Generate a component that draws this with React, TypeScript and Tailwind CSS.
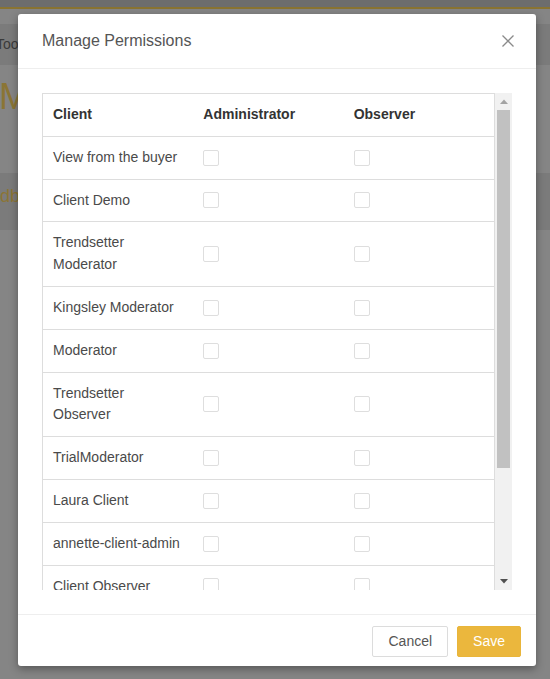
import React from "react";

const rows: string[] = [
  "View from the buyer",
  "Client Demo",
  "Trendsetter Moderator",
  "Kingsley Moderator",
  "Moderator",
  "Trendsetter Observer",
  "TrialModerator",
  "Laura Client",
  "annette-client-admin",
  "Client Observer",
  "Demo Observer",
];

function Box() {
  return <div className="h-4 w-4 rounded-[2px] border border-[#dedede] bg-white" />;
}

export default function App() {
  return (
    <div
      className="relative h-[679px] w-[550px] overflow-hidden bg-[#858585]"
      style={{ fontFamily: '"Liberation Sans", Arial, Helvetica, sans-serif' }}
    >
      {/* dimmed page behind the dialog */}
      <div className="flex flex-col">
        <div className="h-[7px] bg-[#6d6d6d]" />
        <div className="h-[2px] bg-[#8a7432]" />
        <div className="h-[15px]" />
        <div className="flex h-[41px] items-center bg-[#7b7b7b] text-[14px] text-[#3a3a3a]">
          <span className="-ml-[4px]">Tool</span>
        </div>
        <div className="flex h-[108px] items-start pt-[14px]">
          <span className="-ml-[1px] text-[36px] leading-none text-[#8b7535]">M</span>
        </div>
        <div className="flex h-[57px] items-start bg-[#7b7b7b] pt-[10px]">
          <span className="ml-0 text-[18px] text-[#8b7535]">db</span>
        </div>
      </div>

      {/* dialog */}
      <div className="absolute left-[18px] top-[14px] flex h-[652px] w-[518px] flex-col rounded-[3px] bg-white shadow-[0_3px_9px_rgba(0,0,0,0.35)]">
        <div className="flex h-[54px] items-center justify-between pl-6 pr-[22px]">
          <span className="text-[16px] text-[#555]">Manage Permissions</span>
          <svg width="12" height="12" viewBox="0 0 12 12" className="block">
            <path d="M0.5 0.5 L11.5 11.5 M11.5 0.5 L0.5 11.5" stroke="#8a8a8a" strokeWidth="1.3" fill="none" />
          </svg>
        </div>
        <div className="border-t border-[#eeeeee]" />

        <div className="px-6 pt-6 pb-6">
          <div className="flex h-[497px] w-[470px]">
            <div className="h-full w-[453px] overflow-hidden border-x border-[#dddddd]">
              <div className="grid grid-cols-3 border-t border-[#dddddd] py-[10px] text-[14px] font-bold leading-[21.8px] text-[#333]">
                <div className="pl-[10px]">Client</div>
                <div className="pl-[10px]">Administrator</div>
                <div className="pl-[10px]">Observer</div>
              </div>
              {rows.map((r) => (
                <div
                  key={r}
                  className="grid grid-cols-3 border-t border-[#dddddd] py-[10px] text-[14px] leading-[21.8px] text-[#4a4a4a]"
                >
                  <div className="pl-[10px] pr-[10px]">{r}</div>
                  <div className="flex items-center pl-[10px]">
                    <Box />
                  </div>
                  <div className="flex items-center pl-[10px]">
                    <Box />
                  </div>
                </div>
              ))}
            </div>
            {/* scrollbar */}
            <div className="flex h-full w-[17px] flex-col bg-[#f1f1f1]">
              <div className="flex h-[17px] items-center justify-center">
                <svg width="8" height="5" viewBox="0 0 8 5">
                  <path d="M0 5 L4 0.5 L8 5 Z" fill="#a3a3a3" />
                </svg>
              </div>
              <div className="ml-[2px] mr-[2px] h-[358px] bg-[#c1c1c1]" />
              <div className="flex-1" />
              <div className="flex h-[17px] items-center justify-center">
                <svg width="8" height="5" viewBox="0 0 8 5">
                  <path d="M0 0 L4 4.5 L8 0 Z" fill="#505050" />
                </svg>
              </div>
            </div>
          </div>
        </div>

        <div className="flex justify-end gap-[9px] border-t border-[#eeeeee] pt-[11px] pb-[9px] pr-[15px]">
          <button className="h-[31px] rounded-[2px] border border-[#dcdcdc] bg-white px-[15px] text-[14px] text-[#555]">
            Cancel
          </button>
          <button className="h-[31px] rounded-[2px] border border-[#e9b53a] bg-[#ebb73d] px-[15px] text-[14px] text-white">
            Save
          </button>
        </div>
      </div>
    </div>
  );
}
